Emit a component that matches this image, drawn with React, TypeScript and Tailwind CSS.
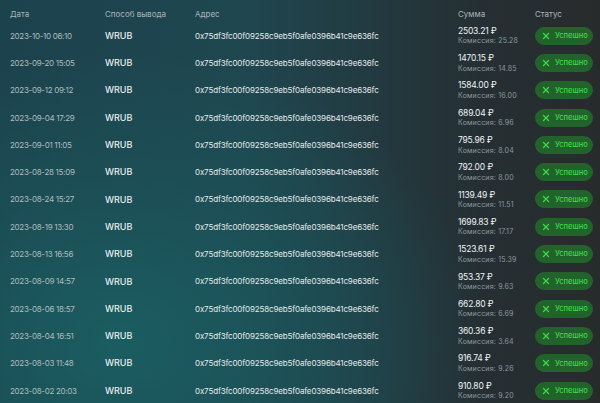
import { X } from "lucide-react";

const address = "0x75df3fc00f09258c9eb5f0afe0396b41c9e636fc";

const rows: Array<{ date: string; sum: string; fee: string }> = [
  { date: "2023-10-10 06:10", sum: "2503.21", fee: "25.28" },
  { date: "2023-09-20 15:05", sum: "1470.15", fee: "14.85" },
  { date: "2023-09-12 09:12", sum: "1584.00", fee: "16.00" },
  { date: "2023-09-04 17:29", sum: "689.04", fee: "6.96" },
  { date: "2023-09-01 11:05", sum: "795.96", fee: "8.04" },
  { date: "2023-08-28 15:09", sum: "792.00", fee: "8.00" },
  { date: "2023-08-24 15:27", sum: "1139.49", fee: "11.51" },
  { date: "2023-08-19 13:30", sum: "1699.83", fee: "17.17" },
  { date: "2023-08-13 16:56", sum: "1523.61", fee: "15.39" },
  { date: "2023-08-09 14:57", sum: "953.37", fee: "9.63" },
  { date: "2023-08-06 18:57", sum: "662.80", fee: "6.69" },
  { date: "2023-08-04 16:51", sum: "360.36", fee: "3.64" },
  { date: "2023-08-03 11:48", sum: "916.74", fee: "9.26" },
  { date: "2023-08-02 20:03", sum: "910.80", fee: "9.20" },
];

const grid = "grid grid-cols-[95px_90px_263px_77px_1fr] items-center pl-[10px] pr-[7px]";

export default function App() {
  return (
    <div
      className="h-[403px] w-[600px] overflow-hidden bg-[radial-gradient(ellipse_75%_90%_at_20%_85%,#1a5d60_0%,rgba(27,84,90,0.6)_45%,rgba(30,50,56,0)_80%),linear-gradient(90deg,#1c424d_0%,#1f4750_40%,#252f33_80%,#282b2c_100%)] font-['Inter',sans-serif]"
    >
      <div className={`${grid} h-[22px] pt-[5px] text-[8px] text-[#a8b6b9]`}>
        <span>Дата</span>
        <span>Способ вывода</span>
        <span>Адрес</span>
        <span>Сумма</span>
        <span>Статус</span>
      </div>
      {rows.map((row) => (
        <div key={row.date} className={`${grid} h-[27.3px]`}>
          <span className="text-[8px] tracking-[-0.3px] text-[#aebcbf]">{row.date}</span>
          <span className="text-[9px] font-medium text-[#e8eeef]">WRUB</span>
          <span className="text-[8px] tracking-[-0.15px] text-[#e3e9ea]">{address}</span>
          <div className="flex flex-col leading-none">
            <span className="text-[8.5px] tracking-[-0.2px] text-[#eef2f3]">{row.sum} ₽</span>
            <span className="mt-[2px] text-[7px] tracking-[0.2px] text-[#8d9a9d]">Комиссия: {row.fee}</span>
          </div>
          <div className="flex h-[18px] w-[58px] items-center gap-[4px] rounded-full bg-[#22632b] pl-[6px] text-[7.5px] font-medium text-[#3fd84a]">
            <X size={10} strokeWidth={3} />
            <span>Успешно</span>
          </div>
        </div>
      ))}
    </div>
  );
}
